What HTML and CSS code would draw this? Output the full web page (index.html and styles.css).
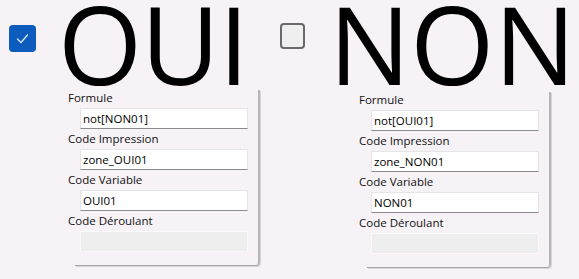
FILE: index.html
```html
<!DOCTYPE html>
<html lang="fr">
<head>
<meta charset="utf-8">
<link rel="stylesheet" href="styles.css">
</head>
<body>
<div class="top">
  <div class="choice choice-oui">
    <span class="box box-checked">
      <svg viewBox="0 0 27 27" width="27" height="27"><path d="M8.5 14 L12 17.5 L18.5 10" fill="none" stroke="#dfe8f5" stroke-width="1.3" stroke-linecap="round" stroke-linejoin="round"/></svg>
    </span>
    <span class="big">OUI</span>
  </div>
  <div class="choice choice-non">
    <span class="box box-empty"></span>
    <span class="big">NON</span>
  </div>
</div>
<div class="panels">
  <div class="panel">
    <div class="lbl">Formule</div>
    <div class="field">not[NON01]</div>
    <div class="lbl">Code Impression</div>
    <div class="field">zone_OUI01</div>
    <div class="lbl">Code Variable</div>
    <div class="field">OUI01</div>
    <div class="lbl">Code Déroulant</div>
    <div class="field disabled"></div>
  </div>
  <div class="panel panel-right">
    <div class="lbl">Formule</div>
    <div class="field">not[OUI01]</div>
    <div class="lbl">Code Impression</div>
    <div class="field">zone_NON01</div>
    <div class="lbl">Code Variable</div>
    <div class="field">NON01</div>
    <div class="lbl">Code Déroulant</div>
    <div class="field disabled"></div>
  </div>
</div>
</body>
</html>
```
FILE: styles.css
```css
html, body {
  margin: 0;
  padding: 0;
  background: #f6f2f6;
  width: 579px;
  height: 279px;
  overflow: hidden;
}
body {
  font-family: "Open Sans", "Noto Sans", sans-serif;
  color: #000;
}
.top {
  display: flex;
  height: 90px;
}
.choice {
  display: flex;
  align-items: flex-start;
}
.choice-oui {
  width: 280px;
  padding-left: 9px;
  box-sizing: border-box;
}
.box {
  display: block;
  box-sizing: border-box;
  width: 27px;
  height: 27px;
  border-radius: 4px;
  margin-top: 25px;
}
.box svg { display: block; }
.box-checked {
  background: #0b5cbd;
}
.box-empty {
  width: 25px;
  height: 26px;
  margin-top: 23px;
  background: #f0eff0;
  border: 2px solid #6a686a;
  border-radius: 4px;
}
.big {
  font-size: 108px;
  line-height: 88px;
  height: 88px;
  letter-spacing: -1px;
  margin-left: 22px;
}
.choice-non .big {
  margin-left: 24px;
  letter-spacing: 0;
}
.panels {
  display: flex;
  align-items: flex-start;
  padding-left: 75px;
  gap: 107px;
}
.panel {
  width: 185px;
  box-sizing: border-box;
  padding: 0 0 13px 5px;
  border-right: 2px solid #b8b4b8;
  border-bottom: 1px solid #a9a6a9;
  border-bottom-right-radius: 4px;
  box-shadow: 1px 1px 0 #d9d5d9;
}
.panel-right {
  width: 184px;
  margin-top: 2px;
  padding-left: 4px;
}
.lbl {
  font-size: 11.5px;
  line-height: 16px;
  height: 16px;
  margin: 2px 0 2px -12px;
  color: #111;
  white-space: nowrap;
}
.lbl:first-child {
  margin-top: 0;
}
.field {
  box-sizing: border-box;
  width: 168px;
  height: 21px;
  background: #fff;
  border: 1px solid #e6e4e6;
  border-bottom: 1px solid #8b898b;
  font-size: 11.5px;
  line-height: 19px;
  padding-left: 2px;
  color: #000;
  white-space: nowrap;
}
.field.disabled {
  background: #efeeef;
  border: 1px solid #fbfafb;
}
```
